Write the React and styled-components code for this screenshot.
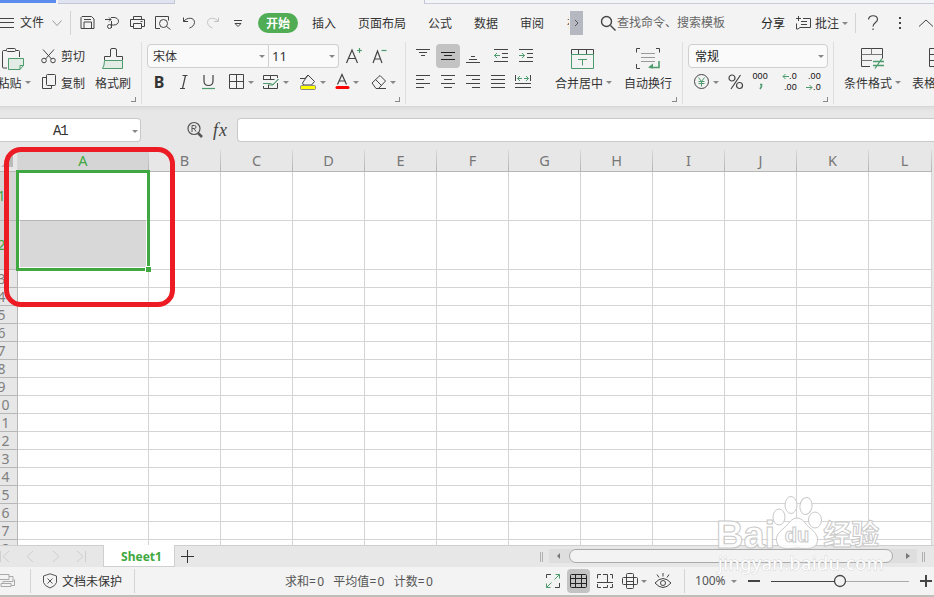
import React from 'react';
import styled, { createGlobalStyle, css } from 'styled-components';

const GlobalStyle = createGlobalStyle`
  *{
    box-sizing: border-box;
  }
  body{
    margin: 0;
    overflow: hidden;
    background: #e7e7e7;
  }
`;

const App = () => (
    <Window>
        <GlobalStyle />
        <DocTabs>
            <DocTab $w={56} $color="#5b8def" />
            <DocTab $w={117} $ml={2} $color="#dfe4f0" $line />
            <DocRest />
        </DocTabs>
        <MenuBar />
        <Ribbon />
        <FormulaBar />
        <Sheet />
        <SheetBar />
        <StatusBar />
        <Desk />
        <Watermark />
    </Window>
);

const MenuBar = () => (
    <Menu>
        <Icon $w={14} $h={10}>
            <path d="M0 .5h14M0 4.5h14M0 9.5h14" />
        </Icon>
        <Label $ml={6} $up>文件</Label>
        <Icon $w={10} $h={8} $ml={8} $color="#999">
            <path d="M.5 1.5l4.5 5 4.5-5" />
        </Icon>
        <Divider $h={24} $ml={8} />
        <Icon $w={15} $h={16} $ml={9}>
            <path d="M2 1.5h9.5l2.5 2.5v9.5h-13v-11zM4 13.5v-6.5h7.5v6.5M4 4.5h7" />
        </Icon>
        <Icon $w={15} $h={16} $ml={10}>
            <path d="M0 4.5h6M4 2.5l2 2-2 2M6 2.5h3a4.5 3.7 0 0 1 0 7.5H6.5M6.5 6v7" />
            <circle cx="4.5" cy="11.5" r="2" />
        </Icon>
        <Icon $w={15} $h={16} $ml={10}>
            <path d="M3.5 4.5V1.5h8V4.5M3 11.5H.5v-7h14v7H12M3.5 8.5h8v5h-8zM10.5 6.5h2" />
        </Icon>
        <Icon $w={16} $h={16} $ml={10}>
            <path d="M5 13.5H.5v-12h13v4M11.5 11.5l4 3" />
            <circle cx="8.5" cy="8.5" r="4" />
        </Icon>
        <Icon $w={14} $h={14} $ml={11}>
            <path d="M1.5 1.5v4H6M1.5 5.5C5 1 12.500 1 12.500 6.500c-.2 2.500-2 4.500-5 5.500" />
        </Icon>
        <Icon $w={14} $h={14} $ml={10} $color="#c3c3c3">
            <path d="M12.5 1.5v4H8M12.5 5.5C9 1 1.500 1 1.500 6.500c.2 2.500 2 4.500 5 5.500" />
        </Icon>
        <Icon $w={10} $h={8} $ml={13}>
            <path d="M1 1.5h8M2 4.500l3 3 3-3z" />
        </Icon>
        <HomeTab>开始</HomeTab>
        <Label $ml={14}>插入</Label>
        <Label $ml={22}>页面布局</Label>
        <Label $ml={22}>公式</Label>
        <Label $ml={22}>数据</Label>
        <Label $ml={22}>审阅</Label>
        <Clip>视</Clip>
        <Scroller>
            <Icon $w={5} $h={8} $color="#555">
                <path d="M1 1l3 3-3 3" />
            </Icon>
        </Scroller>
        <Icon $w={16} $h={16} $ml={17} $sw={1.4}>
            <circle cx="6.5" cy="6.5" r="5" />
            <path d="M10.5 10.5l5 5" />
        </Icon>
        <Label $ml={1} $color="#666" $up>查找命令、搜索模板</Label>
        <Label $ml={36} $color="#222">分享</Label>
        <Icon $w={16} $h={16} $ml={10}>
            <path d="M3.5 1v5M1 3.5h5M8 3.5h7.500v9H5l-2 1.500H1.500V8.500M6 6.500h6M6 9.500h6" />
        </Icon>
        <Label $ml={4}>批注</Label>
        <Caret $ml={3} />
        <Divider $h={20} $ml={7} />
        <Icon $w={12} $h={16} $ml={11} $sw={1.2}>
            <path d="M1.5 4.5c0-5 9-5 9 0 0 3-4.500 3-4.500 7" />
            <path d="M6 13.5v1.500" />
        </Icon>
        <Icon $w={3} $h={14} $ml={19} $sw={2}>
            <path d="M2 1v2M2 6v2M2 11v2" />
        </Icon>
        <Icon $w={16} $h={10} $ml={17}>
            <path d="M1 8.5l7-6.500 7 6.500" />
        </Icon>
    </Menu>
);

const alignLines = [
    'M0 .5h14M0 4.5h8M0 8.5h14M0 12.5h8',
    'M0 .5h14M3 4.5h8M0 8.5h14M3 12.5h8',
    'M0 .5h14M6 4.5h8M0 8.5h14M6 12.5h8',
    'M0 .5h14M0 4.5h14M0 8.5h14M0 12.5h14',
];

const Ribbon = () => (
    <RibbonBar>
        <Group $w={141}>
            <Tall $w={34} $ml={-3}>
                <Icon $w={24} $h={24} $ml={-4}>
                    <path d="M6 4.5H3.5q-1 0-1 1v15.5q0 1 1 1H7M16 4.5h2.5q1 0 1 1V11" />
                    <rect x="6.5" y="2.5" width="9" height="3" rx="1" />
                    <path className="green soft" d="M8.5 12.5h15v7l-3.5 4H8.500zM23.5 19.5h-3.5v4" />
                </Icon>
                <Line>
                    <Label>粘贴</Label>
                    <Caret $ml={3} />
                </Line>
            </Tall>
            <Stack $w={44} $ml={10}>
                <Line>
                    <Icon $w={15} $h={14}>
                        <path d="M2 .5l8.5 9.5M13 .5L4.5 10" />
                        <circle cx="3" cy="11.5" r="2.3" />
                        <circle cx="12" cy="11.5" r="2.3" />
                    </Icon>
                    <Label $ml={5}>剪切</Label>
                </Line>
                <Line>
                    <Icon $w={15} $h={16}>
                        <rect x="5.5" y=".5" width="9" height="11" rx="1" />
                        <path d="M5 3.5H1.5v11h9v-3" />
                    </Icon>
                    <Label $ml={5}>复制</Label>
                </Line>
            </Stack>
            <Tall $w={36} $ml={10}>
                <Icon $w={24} $h={24}>
                    <path d="M3.5 14V10.5h6V4q0-1.500 1.500-1.500h3q1.500 0 1.500 1.500v6.500h6V14" />
                    <path className="green soft" d="M3.5 14.5h18v8H1.500q2-3 2-8z" />
                </Icon>
                <Label>格式刷</Label>
            </Tall>
            <Launcher />
        </Group>
        <Group $w={264}>
            <Stack $ml={5}>
                <Line>
                    <Combo $w={122} $left>
                        <Label>宋体</Label>
                        <Caret />
                    </Combo>
                    <Combo $w={70} $right $pad={3}>
                        <Label $size={13} $up>11</Label>
                        <Caret />
                    </Combo>
                    <Icon $w={18} $h={18} $ml={6} $sw={1.2}>
                        <path d="M1.5 16L7 3l5.500 13M3.500 11.500h7" />
                        <path className="green" d="M12 3.500h5M14.500 1v5" />
                    </Icon>
                    <Icon $w={18} $h={18} $ml={9} $sw={1.2}>
                        <path d="M1 16l4.500-12L10 16M2.500 12h6" />
                        <path className="green" d="M9.500 3.500h5" />
                    </Icon>
                </Line>
                <Line>
                    <Letter $w={14} $ml={5}>B</Letter>
                    <Icon $w={10} $h={16} $ml={13} $sw={1.2}>
                        <path d="M3.500 1.500h5M1 14.500h5M6.500 1.500L3.500 14.500" />
                    </Icon>
                    <Icon $w={13} $h={16} $ml={13} $sw={1.2}>
                        <path d="M2 1v6c0 6 9 6 9 0V1" />
                        <path className="green" d="M0 14.500h13" />
                    </Icon>
                    <Icon $w={16} $h={16} $ml={14}>
                        <path d="M.5.5h14v14H.5zM7.5.5v14M.5 7.500h14" />
                    </Icon>
                    <Caret $ml={3} />
                    <Icon $w={17} $h={16} $ml={9}>
                        <path d="M.5 6V1.500h14V4M.5 12v2.500h14V9M.5 5.500h11M7.500 1.500v4M5.500 14.500v-4" />
                        <path className="green" d="M0 9.500h7l3 1L15.500 5 10 11H6" />
                    </Icon>
                    <Caret $ml={3} />
                    <Icon $w={17} $h={16} $ml={11}>
                        <path d="M2.500 9L8 1l6.500 6.500-3 3.500h-8zM0 4.500h5l3-3.500" />
                        <rect x=".5" y="11.500" width="15" height="4" rx="1" fill="#ff0" stroke="#888" />
                    </Icon>
                    <Caret $ml={3} />
                    <Icon $w={15} $h={16} $ml={9} $sw={1.2}>
                        <path d="M2.500 10.500L7 .5l4.500 10M4 7h6" />
                        <path d="M2 13.500h11" stroke="#f00" strokeWidth="3" strokeLinecap="round" />
                    </Icon>
                    <Caret $ml={3} />
                    <Icon $w={16} $h={16} $ml={12}>
                        <path d="M1 9l8-7.500 5.500 5.500-7 7.500H5zM4.500 5.500l6 6M7 14.500h8" />
                    </Icon>
                    <Caret $ml={3} />
                </Line>
            </Stack>
            <Launcher />
        </Group>
        <Group $w={277}>
            <Stack $ml={10}>
                <Line>
                    <Icon $w={14} $h={14}>
                        <path d="M0 .5h14M3 3.500h8M5 6.500h4" />
                    </Icon>
                    <Pressed $w={24} $ml={6}>
                        <Icon $w={14} $h={10}>
                            <path d="M0 1.500h14M3 4.500h8M0 8.500h14" stroke="#222" />
                        </Icon>
                    </Pressed>
                    <Icon $w={14} $h={14} $ml={6}>
                        <path d="M5 7.500h4M3 10.500h8M0 13.500h14" />
                    </Icon>
                    <Icon $w={16} $h={14} $ml={13}>
                        <path d="M1 .5h14M9 4.500h6M9 8.500h6M1 12.500h14" />
                        <path className="green" d="M7 6.500H1.500M4 4L1.500 6.500 4 9" />
                    </Icon>
                    <Icon $w={16} $h={14} $ml={9}>
                        <path d="M1 .5h14M9 4.500h6M9 8.500h6M1 12.500h14" />
                        <path className="green" d="M1 6.500h5.500M4 4L6.500 6.500 4 9" />
                    </Icon>
                </Line>
                <Line $gap={11}>
                    {alignLines.map((d) => (
                        <Icon key={d} $w={14} $h={14}><path d={d} /></Icon>
                    ))}
                    <Icon $w={17} $h={14} $ml={-1}>
                        <path d="M.5 0v6M15.500 0v6M0 8.500h16M0 12.500h16" />
                        <path className="green" d="M2.500 3.500h4.500M5 1L2.500 3.500 5 6M9 3.500h4.500M11 1l2.500 2.500L11 6" />
                    </Icon>
                </Line>
            </Stack>
            <Tall $w={57} $ml={21}>
                <Icon $w={24} $h={24} $ml={-1}>
                    <path d="M.5 8.500V3.500h22v5M7.500 3.500v5M15.500 3.500v5" />
                    <path className="green" d="M.5 8.500h22v14H.5zM7 13.500h9M11.500 13.500v6" />
                </Icon>
                <Line>
                    <Label>合并居中</Label>
                    <Caret $ml={3} />
                </Line>
            </Tall>
            <Tall $w={48} $ml={12}>
                <Icon $w={24} $h={24}>
                    <path d="M.5 6.500v-4H4M20 2.500h3.500v4M.5 18v4.500H4" />
                    <path d="M5 7.500h14M5 11.500h14M5 15.500h14" stroke="#999" />
                    <path className="green" d="M23 15v6.500H14" strokeWidth="1.6" />
                    <path d="M12 21.500l5-4v5z" fill="#4d9b6c" stroke="none" />
                </Icon>
                <Label>自动换行</Label>
            </Tall>
            <Launcher />
        </Group>
        <Group $w={151}>
            <Stack $ml={5}>
                <Combo $w={140} $left $right $pad={6}>
                    <Label $color="#222">常规</Label>
                    <Caret />
                </Combo>
                <Line>
                    <Icon $w={16} $h={16} $ml={6}>
                        <circle cx="7.5" cy="7.5" r="7" />
                        <path className="green" d="M4.500 3.500l3 4 3-4M7.500 7.500v5M4.500 7.500h6M4.500 9.500h6" />
                    </Icon>
                    <Caret $ml={3} />
                    <Icon $w={16} $h={16} $ml={9} $sw={1.2}>
                        <circle cx="4" cy="4" r="3" />
                        <circle cx="11.5" cy="11.5" r="3" />
                        <path d="M12.500 1L3 15" />
                    </Icon>
                    <Digits $ml={8}>
                        <span>000</span>
                        <Icon $w={15} $h={9}>
                            <path className="green" d="M7 2.500h1.500v2L7 7" strokeWidth="1.5" />
                        </Icon>
                    </Digits>
                    <Digits $ml={13}>
                        <Line $h={11}>
                            <Icon $w={7} $h={6}><path className="green" d="M7 2.500H1M3.500 0L1 2.500 3.500 5" /></Icon>
                            <span>.0</span>
                        </Line>
                        <span>.00</span>
                    </Digits>
                    <Digits $ml={8}>
                        <span>.00</span>
                        <Line $h={11}>
                            <Icon $w={7} $h={6}><path className="green" d="M0 2.500h6M3.500 0L6 2.500 3.500 5" /></Icon>
                            <span>.0</span>
                        </Line>
                    </Digits>
                </Line>
            </Stack>
            <Launcher />
        </Group>
        <Group $w={101} $last>
            <Tall $w={57} $ml={10}>
                <Icon $w={24} $h={24} $ml={1}>
                    <path d="M9 20.500H.5V2.500h21v10" />
                    <path d="M.5 8.500h21M.5 14.500H11M10.500 2.500v6" stroke="#777" />
                    <path className="green" d="M12 15.500h11M12 19.500h11M21 12.500l-7 10" strokeWidth="1.3" />
                </Icon>
                <Line>
                    <Label>条件格式</Label>
                    <Caret $ml={3} />
                </Line>
            </Tall>
            <Tall $w={48} $ml={11}>
                <Icon $w={24} $h={24} $ml={10}>
                    <path d="M10 20.500H.5V2.500h21v11M.5 8.500h21M.5 14.500H12M10.500 2.500v18" />
                </Icon>
                <Label>表格样式</Label>
            </Tall>
        </Group>
    </RibbonBar>
);

const FormulaBar = () => (
    <Formula>
        <NameBox>
            <span>A1</span>
            <Caret />
        </NameBox>
        <Icon $w={18} $h={18} $ml={45} $color="#555" $sw={1.2}>
            <circle cx="8" cy="7.5" r="6" />
            <path d="M12 12l4 4" strokeWidth="2.5" />
            <path d="M6 11V4.500h2.500q1.500 0 1.500 1.500t-1.500 1.500h-2.500M8 7.500l2 3" strokeWidth="1" />
        </Icon>
        <Fx>fx</Fx>
        <Input />
    </Formula>
);

const columns = 'ABCDEFGHIJKL'.split('');
const rows = Array.from({ length: 18 }, (_, i) => i + 1);

const Sheet = () => (
    <SheetArea>
        <Headers>
            <Corner>
                <Icon $w={12} $h={12}>
                    <path d="M12 0v12H0z" fill="#b9b9b9" stroke="none" />
                </Icon>
            </Corner>
            {columns.map((name) => (
                <ColHead key={name} $active={name === 'A'} $last={name === 'L'}>
                    <span>{name}</span>
                </ColHead>
            ))}
        </Headers>
        <Rows>
            {rows.map((n) => (
                <Row key={n} $tall={n < 3}>
                    <RowHead $active={n < 3}>{n}</RowHead>
                    {columns.map((name) => <Cell key={name} $first={name === 'A'} $last={name === 'L'} />)}
                </Row>
            ))}
        </Rows>
        <Selection>
            <Filled />
            <Handle />
        </Selection>
        <RedFrame />
    </SheetArea>
);

const SheetBar = () => (
    <TabsBar>
        <Icon $w={103} $h={13} $color="#cfcfcf">
            <path d="M.5 1v11M9 1L3 6.500l6 5.500M33 1l-6 5.500 6 5.500M53 1l6 5.500-6 5.500M77 1l6 5.500-6 5.500M85.500 1v11" />
        </Icon>
        <SheetTab>Sheet1</SheetTab>
        <Icon $w={13} $h={13} $ml={6}>
            <path d="M0 6.500h13M6.500 0v13" stroke="#333" />
        </Icon>
        <Grip $ml={346} />
        <Track>
            <Icon $w={20} $h={8}>
                <path d="M11 1v6L8 4z" fill="#777" stroke="none" />
            </Icon>
            <Thumb />
            <Icon $w={24} $h={8}>
                <path d="M13 1v6l4-3z" fill="#777" stroke="none" />
            </Icon>
        </Track>
        <Grip $ml={5} />
    </TabsBar>
);

const StatusBar = () => (
    <Status>
        <Icon $w={16} $h={16} $color="#aaa">
            <path d="M0 1.500h9v5H0M9 3.500h4v5H3v2M1 10.500h10v3H1zM11 12.500h3.500v-6" />
        </Icon>
        <Divider $h={24} $ml={14} />
        <Icon $w={15} $h={16} $ml={12} $color="#555">
            <path d="M7 .8l6.500 2.200v6.500q-1 3.500-6.500 5.500-5.500-2-6.500-5.500V3zM4.500 5.500l5 5M9.500 5.500l-5 5" />
        </Icon>
        <Label $ml={4}>文档未保护</Label>
        <Divider $h={24} $ml={12} />
        <Sums>
            <Label $color="#555">求和<Value>=0</Value></Label>
            <Label $color="#555">平均值<Value>=0</Value></Label>
            <Label $color="#555">计数<Value>=0</Value></Label>
        </Sums>
        <Icon $w={15} $h={16}>
            <path d="M.5 5V1.500H5M13.500 10v4.500H9" />
            <path className="green" d="M8.500 6.500l5-5M9.500 1.500h4V5.500M5.500 9.500l-5 5M.5 10.500v4H4.500" />
        </Icon>
        <Pressed $w={23} $ml={6}>
            <Icon $w={17} $h={16} $color="#222">
                <rect x=".5" y="1.500" width="16" height="13" rx="1" />
                <path d="M.5 5.500h16M.5 10.500h16M5.500 1.500v13M11.500 1.500v13" />
            </Icon>
        </Pressed>
        <Icon $w={17} $h={16} $ml={7}>
            <path d="M.5 5.500V1.500H4M6 1.500h4.500v8M13 1.500h2.500V5.500M0 9.500h16M.5 11v3.500H4M6 14.500h4.500V12M13 14.500h2.500V11" />
        </Icon>
        <Icon $w={17} $h={16} $ml={8}>
            <rect x=".5" y="4.500" width="15" height="7" rx="1" />
            <rect x="4.500" y=".5" width="7" height="15" rx="1" />
            <path d="M4.500 8.500h7" />
        </Icon>
        <Caret $ml={2} />
        <Icon $w={18} $h={18} $ml={7}>
            <path d="M1 11q8-9 16 0-8 9-16 0zM9 1v3.500M3 2.500l2 3M15 2.500l-2 3" />
            <circle cx="9" cy="11" r="2.5" />
        </Icon>
        <Divider $h={24} $ml={12} />
        <Label $ml={10} $w={33} $color="#555" $up>100%</Label>
        <Caret $ml={3} />
        <Icon $w={12} $h={12} $ml={11} $sw={2}>
            <path d="M0 6h12" />
        </Icon>
        <Icon $w={138} $h={14} $ml={11}>
            <path d="M0 7.500h63" />
            <path d="M75 7.500h63" stroke="#aaa" />
            <circle cx="69" cy="7" r="5.500" fill="#f3f3f3" strokeWidth="1.3" />
        </Icon>
        <Icon $w={12} $h={12} $ml={11} $sw={2}>
            <path d="M0 6h12M6 0v12" />
        </Icon>
    </Status>
);

const Watermark = () => (
    <Brand>
        <BrandRow>
            <BrandText>Bai</BrandText>
            <svg width="52" height="56" viewBox="0 0 52 56" fill="#fff" fillOpacity=".85" stroke="#c9c9c9">
                <ellipse cx="8" cy="22" rx="6" ry="8" />
                <ellipse cx="20" cy="10" rx="6" ry="8.500" />
                <ellipse cx="35" cy="11" rx="6" ry="8.500" transform="rotate(8 35 11)" />
                <ellipse cx="44" cy="25" rx="6.500" ry="8" />
                <path d="M26 23c6 0 8 6 13 10 6 5 9 9 7 15-2 6-9 6-20 5-11 1-18 1-20-5-2-6 1-10 7-15 5-4 7-10 13-10z" />
                <text x="26" y="47" textAnchor="middle" fontSize="20" fontFamily="Liberation Sans" fontWeight="bold">du</text>
            </svg>
            <BrandName>经验</BrandName>
        </BrandRow>
        <Site>jingyan.baidu.com</Site>
    </Brand>
);

const Window = styled.div`
  position: relative;
  width: 934px;
  height: 597px;
  overflow: hidden;
  display: flex;
  flex-direction: column;
  background: #e7e7e7;
  font-family: "Noto Sans", "Noto Sans CJK SC", sans-serif;
  font-size: 12px;
  color: #333;
`;

/* shared parts */

const iconBase = css`
  display: block;
  flex: none;
  overflow: visible;
  width: ${p => p.$w}px;
  height: ${p => p.$h}px;
  margin-left: ${p => p.$ml || 0}px;
  fill: none;
  stroke: ${p => p.$color || '#444'};
  stroke-width: ${p => p.$sw || 1}px;
  .green{
    stroke: #4d9b6c;
  }
  .soft{
    fill: #e2ece4;
  }
`;
const Icon = styled.svg`
  ${iconBase}
`;
const Label = styled.span`
  flex: none;
  width: ${p => p.$w ? `${p.$w}px` : 'auto'};
  margin-left: ${p => p.$ml || 0}px;
  padding-top: ${p => p.$up ? 0 : 2}px;
  font-size: ${p => p.$size || 12}px;
  line-height: 18px;
  white-space: nowrap;
  color: ${p => p.$color || '#333'};
`;
const Caret = styled.i`
  flex: none;
  width: 6px;
  margin-left: ${p => p.$ml || 0}px;
  border: 3px solid transparent;
  border-top-color: #888;
  border-bottom: 0;
`;
const Divider = styled.i`
  flex: none;
  width: 1px;
  height: ${p => p.$h}px;
  margin-left: ${p => p.$ml || 0}px;
  background: #d4d4d4;
`;
const Pressed = styled.div`
  flex: none;
  width: ${p => p.$w}px;
  height: 24px;
  margin-left: ${p => p.$ml}px;
  display: flex;
  align-items: center;
  justify-content: center;
  border-radius: 4px;
  background: #c3c3c3;
`;

/* document tabs and menu */

const DocTabs = styled.div`
  flex: none;
  display: flex;
  height: 4px;
  background: #f3f3f3;
`;
const DocTab = styled.div`
  width: ${p => p.$w}px;
  height: ${p => p.$line ? 4 : 3}px;
  margin-left: ${p => p.$ml || 0}px;
  background: ${p => p.$color};
  border: 0 solid #c2c6d6;
  border-width: ${p => p.$line ? '0 1px 1px 0' : 0};
`;
const DocRest = styled.div`
  flex: 1;
  margin-left: 249px;
  border-left: 1px solid #c2c6d6;
  border-bottom: 1px solid #c9ccda;
  background: #f3f4f8;
`;
const Menu = styled.div`
  flex: none;
  display: flex;
  align-items: center;
  height: 38px;
  background: #f3f3f3;
`;
const HomeTab = styled.div`
  flex: none;
  width: 40px;
  height: 20px;
  margin-left: 15px;
  border-radius: 10px;
  background: #50ad55;
  color: #fff;
  font-weight: 700;
  line-height: 21px;
  text-align: center;
`;
const Clip = styled.span`
  width: 3px;
  margin-left: 23px;
  overflow: hidden;
  white-space: nowrap;
`;
const Scroller = styled.div`
  flex: none;
  width: 13px;
  height: 24px;
  margin-left: 1px;
  display: flex;
  align-items: center;
  justify-content: center;
  background: #b5b8c1;
`;

/* ribbon */

const RibbonBar = styled.div`
  flex: none;
  display: flex;
  height: 65px;
  background: #f3f3f3;
  border-bottom: 1px solid #d6d6d6;
`;
const Group = styled.div`
  position: relative;
  flex: none;
  display: flex;
  width: ${p => p.$w + 1}px;
  height: 62px;
  padding-top: 2px;
  border-right: ${p => p.$last ? 0 : '1px solid #dedede'};
  &:not(:first-child){
    width: ${p => p.$w}px;
  }
`;
const Line = styled.div`
  flex: none;
  display: flex;
  align-items: center;
  gap: ${p => p.$gap || 0}px;
  height: ${p => p.$h || 24}px;
`;
const Stack = styled.div`
  flex: none;
  display: flex;
  flex-direction: column;
  gap: 2px;
  width: ${p => p.$w ? `${p.$w}px` : 'auto'};
  margin-left: ${p => p.$ml || 0}px;
  > ${Line} + ${Line} > ${Label}{
    padding-top: 3px;
  }
`;
const Tall = styled.div`
  flex: none;
  display: flex;
  flex-direction: column;
  align-items: center;
  width: ${p => p.$w}px;
  margin-left: ${p => p.$ml || 0}px;
  margin-top: 2px;
  > ${Label}{
    padding-top: 3px;
    line-height: 22px;
  }
  > ${Line} > ${Label}{
    padding-top: 4px;
  }
`;
const Launcher = styled.i`
  position: absolute;
  right: 5px;
  bottom: 2px;
  width: 5px;
  height: 5px;
  border: solid #888;
  border-width: 0 1px 1px 0;
`;
const Combo = styled.div`
  flex: none;
  display: flex;
  align-items: center;
  justify-content: space-between;
  width: ${p => p.$w}px;
  height: 24px;
  padding: 0 3px 0 ${p => p.$pad || 5}px;
  border: 1px solid #cfcfcf;
  border-left-width: ${p => p.$left ? 1 : 0}px;
  border-radius: ${p => `${p.$left ? 4 : 0}px ${p.$right ? 4 : 0}px ${p.$right ? 4 : 0}px ${p.$left ? 4 : 0}px`};
  background: #fafafa;
`;
const Letter = styled.span`
  width: ${p => p.$w}px;
  margin-left: ${p => p.$ml}px;
  text-align: center;
  font: 700 16px/20px "Noto Sans", sans-serif;
`;
const Digits = styled.div`
  flex: none;
  width: 16px;
  height: 22px;
  margin-left: ${p => p.$ml}px;
  display: flex;
  flex-direction: column;
  align-items: flex-end;
  font: 9px/11px "Liberation Sans", sans-serif;
  letter-spacing: .2px;
  white-space: nowrap;
  color: #111;
`;

/* formula bar */

const Formula = styled.div`
  flex: none;
  display: flex;
  align-items: center;
  height: 43px;
  padding-top: 3px;
  background: linear-gradient(#dedede, #e7e7e7 5px);
`;
const NameBox = styled.div`
  flex: none;
  display: flex;
  align-items: center;
  width: 141px;
  height: 24px;
  padding: 2px 2px 0 53px;
  justify-content: space-between;
  border: 1px solid #c9c9c9;
  border-left: 0;
  border-radius: 0 4px 4px 0;
  background: #fff;
  font: 14px "Liberation Mono", monospace;
  letter-spacing: -1.2px;
`;
const Fx = styled.span`
  flex: none;
  width: 18px;
  margin-left: 9px;
  font: italic 18px/20px "Liberation Serif", serif;
  letter-spacing: 1px;
  color: #444;
`;
const Input = styled.div`
  flex: 1;
  height: 24px;
  margin-left: 6px;
  border: 1px solid #c9c9c9;
  border-right: 0;
  border-radius: 4px 0 0 4px;
  background: #fff;
`;

/* sheet */

const SheetArea = styled.div`
  position: relative;
  flex: none;
  height: 395px;
`;
const Headers = styled.div`
  display: flex;
  width: 932px;
  height: 22px;
  border-bottom: 1px solid #b7b7b7;
`;
const Corner = styled.div`
  flex: none;
  display: flex;
  align-items: flex-end;
  width: 18px;
  padding: 0 0 4px 1px;
  border-right: 1px solid #d9d9d9;
`;
const ColHead = styled.div`
  flex: none;
  width: ${p => p.$active ? 131 : p.$last ? 63 : 72}px;
  padding-left: ${p => p.$last ? 4 : 0}px;
  border-right: 1px solid;
  border-image: linear-gradient(#dcdcdc, #b0b0b0) 1;
  background: ${p => p.$active ? '#d5d5d5' : '#e7e7e7'};
  color: ${p => p.$active ? '#40a840' : '#777'};
  font-size: 14.5px;
  line-height: 21px;
  text-align: center;
  span{
    margin-left: ${p => p.$last ? 5 : 0}px;
  }
`;
const Rows = styled.div`
  width: 932px;
  height: 373px;
  overflow: hidden;
  border-right: 1px solid #d4d4d4;
`;
const Row = styled.div`
  display: flex;
  width: 948px;
  height: ${p => p.$tall ? 49 : 18}px;
  margin-left: -16px;
`;
const RowHead = styled.div`
  flex: none;
  display: flex;
  align-items: center;
  justify-content: center;
  width: 34px;
  padding-left: 2px;
  border: solid #b7b7b7;
  border-width: 0 1px 1px 0;
  background: ${p => p.$active ? '#d5d5d5' : '#e7e7e7'};
  color: ${p => p.$active ? '#40a840' : '#808080'};
  font-size: 14px;
  line-height: 16px;
`;
const Cell = styled.div`
  flex: none;
  width: ${p => p.$first ? 131 : p.$last ? 63 : 72}px;
  border: solid #d4d4d4;
  border-width: 0 1px 1px 0;
  background: #fff;
`;
const Selection = styled.div`
  position: absolute;
  left: 16px;
  top: 20px;
  width: 134px;
  height: 101px;
  border: 3px solid #40a840;
`;
const Filled = styled.div`
  height: 47px;
  margin: 47px 1px 0;
  border-top: 1px solid #b7b7b7;
  background: #d8d8d8;
`;
const Handle = styled.i`
  position: absolute;
  right: -4px;
  bottom: -4px;
  width: 6px;
  height: 6px;
  border: solid #fff;
  border-width: 1px 0 0 1px;
  background: #40a840;
`;
const RedFrame = styled.div`
  position: absolute;
  left: 4px;
  top: -3px;
  width: 171px;
  height: 160px;
  border: 5px solid #ed1c24;
  border-radius: 17px;
`;

/* bottom bars */

const TabsBar = styled.div`
  flex: none;
  display: flex;
  align-items: center;
  height: 22px;
  border-top: 1px solid #cfcfcf;
  background: #e7e7e7;
`;
const SheetTab = styled.div`
  flex: none;
  width: 72px;
  height: 22px;
  margin-top: -1px;
  padding-left: 5px;
  border: 1px solid #cfcfcf;
  border-top: 0;
  background: #fff;
  color: #40a840;
  font-weight: 700;
  line-height: 23px;
  text-align: center;
`;
const Grip = styled.i`
  flex: none;
  width: 3px;
  height: 10px;
  margin-left: ${p => p.$ml}px;
  border: solid #b0b0b0;
  border-width: 0 1px;
`;
const Track = styled.div`
  flex: none;
  display: flex;
  align-items: center;
  width: 368px;
  height: 14px;
  margin: -1px 0 0 6px;
  background: #dedede;
`;
const Thumb = styled.div`
  flex: 1;
  height: 14px;
  border: 1px solid #aaa;
  border-radius: 7px;
  background: #f3f3f3;
`;
const Status = styled.div`
  flex: none;
  display: flex;
  align-items: center;
  height: 28px;
  background: #f3f3f3;
`;
const Sums = styled.div`
  flex: none;
  display: flex;
  gap: 8px;
  width: 411px;
  padding-left: 150px;
`;
const Value = styled.span`
  letter-spacing: 1.3px;
`;
const Desk = styled.div`
  flex: none;
  height: 2px;
  background: #bfbfb8;
`;

/* watermark */

const Brand = styled.div`
  position: absolute;
  left: 716px;
  top: 495px;
  width: 170px;
  color: rgba(255, 255, 255, .85);
  -webkit-text-stroke: 1px #c9c9c9;
`;
const BrandRow = styled.div`
  display: flex;
  align-items: flex-end;
  height: 56px;
  svg{
    flex: none;
    margin-left: -4px;
  }
`;
const BrandText = styled.span`
  margin-bottom: -4px;
  font: 700 38px/40px "Liberation Sans", sans-serif;
`;
const BrandName = styled.span`
  font: 700 28px/36px "Noto Sans CJK SC", sans-serif;
`;
const Site = styled.div`
  color: #fff;
  margin-left: 2px;
  font: 18px/24px "Noto Sans", sans-serif;
  letter-spacing: .6px;
  -webkit-text-stroke: 1px #d6d6d6;
  paint-order: stroke fill;
`;

export default App;
